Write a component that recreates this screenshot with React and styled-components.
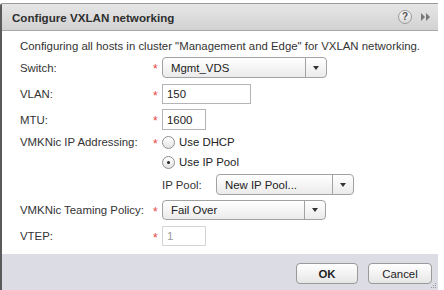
import React from "react";
import styled, { createGlobalStyle } from "styled-components";

const Global = createGlobalStyle`
  html, body { margin: 0; padding: 0; background: #fff; }
  body { font-family: "Liberation Sans", Arial, sans-serif; font-size: 11.4px; color: #333; }
`;

const Window = styled.div`
  margin-top: 3px;
  width: 436px;
  height: 287px;
  border-left: 2px solid #5a5a5a;
  border-top: 1px solid #9a9a9a;
  border-top-left-radius: 3px;
  display: flex;
  flex-direction: column;
  background: #fff;
  box-sizing: content-box;
`;

const TitleBar = styled.div`
  height: 26px;
  flex: none;
  display: flex;
  align-items: center;
  padding: 0 8px 0 10px;
  background: linear-gradient(#e6e6e6, #d2d2d2);
  border-bottom: 1px solid #a8a8a8;
`;

const Title = styled.div`
  flex: 1;
  font-weight: bold;
  font-size: 11.6px;
  color: #2f2f2f;
`;

const HelpIcon = styled.div`
  width: 12px;
  height: 12px;
  border-radius: 50%;
  border: 1px solid #9a9a9a;
  background: linear-gradient(#fafafa, #d8d8d8);
  color: #555;
  font-size: 10px;
  font-weight: bold;
  line-height: 12px;
  text-align: center;
  margin-right: 9px;
`;

const Body = styled.div`
  flex: 1;
  padding: 8px 0 0 18px;
`;

const Desc = styled.div`
  line-height: 14px;
  color: #333;
  white-space: nowrap;
`;

const Row = styled.div`
  display: flex;
  align-items: center;
  height: ${(p) => p.$h}px;
  margin-top: ${(p) => p.$mt}px;
  white-space: nowrap;
`;

const Label = styled.div`
  width: 133px;
  flex: none;
  color: #333;
`;

const Req = styled.div`
  width: 9px;
  flex: none;
  color: #e64545;
  font-size: 12px;
  line-height: 10px;
  padding-top: 3px;
`;

const Select = styled.div`
  width: ${(p) => p.$w}px;
  flex: none;
  height: 100%;
  box-sizing: border-box;
  border: 1px solid #a2a2a2;
  border-radius: 4px;
  background: linear-gradient(#ffffff, #ebebeb);
  display: flex;
  align-items: center;
`;

const SelectText = styled.div`
  flex: 1;
  padding-left: 8px;
  color: #222;
`;

const Arrow = styled.div`
  width: 20px;
  height: 100%;
  border-left: 1px solid #a2a2a2;
  display: flex;
  align-items: center;
  justify-content: center;
  &::after {
    content: "";
    border-left: 3px solid transparent;
    border-right: 3px solid transparent;
    border-top: 4px solid #333;
  }
`;

const Input = styled.div`
  width: ${(p) => p.$w}px;
  flex: none;
  height: 100%;
  box-sizing: border-box;
  border: 1px solid ${(p) => (p.$disabled ? "#d4d4d4" : "#b4b4b4")};
  background: #fff;
  padding-left: 4px;
  display: flex;
  align-items: center;
  color: ${(p) => (p.$disabled ? "#9a9a9a" : "#222")};
`;

const Radio = styled.div`
  width: 11px;
  height: 11px;
  flex: none;
  border-radius: 50%;
  border: 1px solid #8f8f8f;
  background: linear-gradient(#ffffff, #e4e4e4);
  display: flex;
  align-items: center;
  justify-content: center;
  margin-right: 4px;
  &::after {
    content: "";
    width: 3px;
    height: 3px;
    border-radius: 50%;
    background: ${(p) => (p.$checked ? "#222" : "transparent")};
  }
`;

const RadioText = styled.span`
  color: #222;
`;

const SubLabel = styled.div`
  width: 54px;
  flex: none;
  color: #333;
`;

const Footer = styled.div`
  height: 37px;
  flex: none;
  background: #dcdce4;
  display: flex;
  justify-content: flex-end;
  align-items: flex-start;
  gap: 10px;
  padding: 9px 6px 0 0;
  box-sizing: border-box;
  position: relative;
`;

const Button = styled.div`
  width: ${(p) => p.$w}px;
  height: 21px;
  box-sizing: border-box;
  border: 1px solid #9a9a9a;
  border-radius: 4px;
  background: linear-gradient(#ffffff, #e6e6e6);
  display: flex;
  align-items: center;
  justify-content: center;
  font-weight: ${(p) => (p.$bold ? "bold" : "normal")};
  color: #222;
`;

const Grip = styled.svg`
  position: absolute;
  right: 1px;
  bottom: 2px;
`;

export default function App() {
  return (
    <>
      <Global />
      <Window>
        <TitleBar>
          <Title>Configure VXLAN networking</Title>
          <HelpIcon>?</HelpIcon>
          <svg width="9" height="8" viewBox="0 0 9 8">
            <path d="M0 0 L4 4 L0 8 Z M5 0 L9 4 L5 8 Z" fill="#777" />
          </svg>
        </TitleBar>
        <Body>
          <Desc>
            Configuring all hosts in cluster "Management and Edge" for VXLAN networking.
          </Desc>
          <Row $h={21} $mt={4}>
            <Label>Switch:</Label>
            <Req>*</Req>
            <Select $w={165}>
              <SelectText>Mgmt_VDS</SelectText>
              <Arrow />
            </Select>
          </Row>
          <Row $h={20} $mt={6}>
            <Label>VLAN:</Label>
            <Req>*</Req>
            <Input $w={89}>150</Input>
          </Row>
          <Row $h={21} $mt={5}>
            <Label>MTU:</Label>
            <Req>*</Req>
            <Input $w={44}>1600</Input>
          </Row>
          <Row $h={16} $mt={4}>
            <Label>VMKNic IP Addressing:</Label>
            <Req>*</Req>
            <Radio />
            <RadioText>Use DHCP</RadioText>
          </Row>
          <Row $h={16} $mt={4}>
            <Label />
            <Req />
            <Radio $checked />
            <RadioText>Use IP Pool</RadioText>
          </Row>
          <Row $h={21} $mt={4}>
            <Label />
            <Req />
            <SubLabel>IP Pool:</SubLabel>
            <Select $w={138}>
              <SelectText>New IP Pool...</SelectText>
              <Arrow />
            </Select>
          </Row>
          <Row $h={20} $mt={5}>
            <Label>VMKNic Teaming Policy:</Label>
            <Req>*</Req>
            <Select $w={164}>
              <SelectText>Fail Over</SelectText>
              <Arrow />
            </Select>
          </Row>
          <Row $h={20} $mt={6}>
            <Label>VTEP:</Label>
            <Req>*</Req>
            <Input $w={44} $disabled>1</Input>
          </Row>
        </Body>
        <Footer>
          <Button $w={62} $bold>OK</Button>
          <Button $w={64}>Cancel</Button>
          <Grip width="6" height="6" viewBox="0 0 6 6">
            <g fill="#9a9a9a">
              <rect x="4" y="0" width="1" height="1" />
              <rect x="2" y="2" width="1" height="1" />
              <rect x="4" y="2" width="1" height="1" />
              <rect x="0" y="4" width="1" height="1" />
              <rect x="2" y="4" width="1" height="1" />
              <rect x="4" y="4" width="1" height="1" />
            </g>
          </Grip>
        </Footer>
      </Window>
    </>
  );
}
